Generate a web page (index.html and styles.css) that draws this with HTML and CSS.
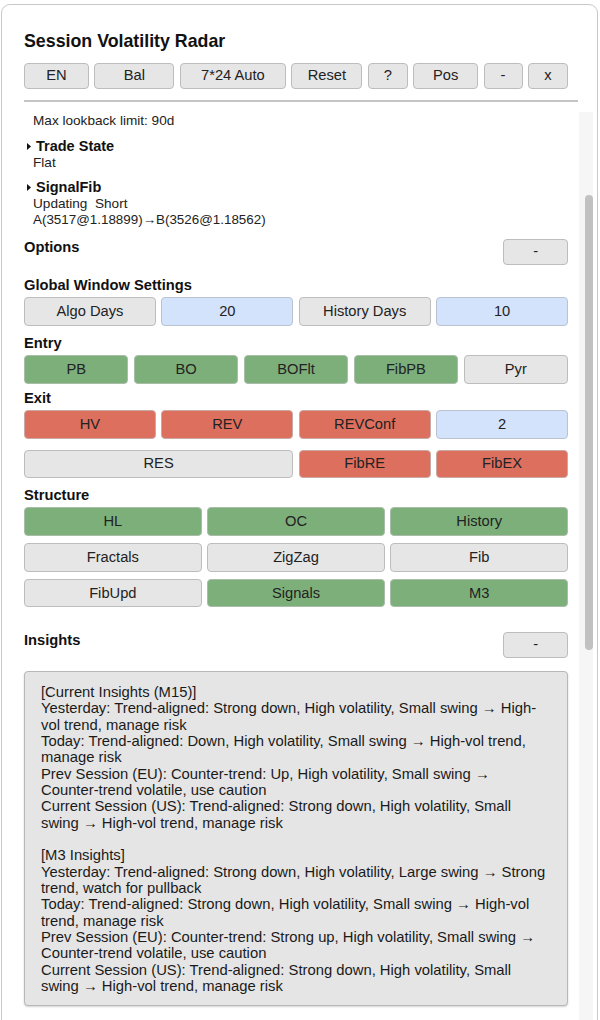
FILE: index.html
```html
<!DOCTYPE html>
<html lang="en">
<head>
<meta charset="utf-8">
<title>Session Volatility Radar</title>
<link rel="stylesheet" href="styles.css">
</head>
<body>
<div class="panel">
  <div class="title">Session Volatility Radar</div>
  <div class="toolbar">
    <button class="btn">EN</button>
    <button class="btn">Bal</button>
    <button class="btn">7*24 Auto</button>
    <button class="btn">Reset</button>
    <button class="btn">?</button>
    <button class="btn">Pos</button>
    <button class="btn">-</button>
    <button class="btn">x</button>
  </div>
  <div class="sep"></div>
  <div class="scroll">
    <div class="content">
      <div class="info">Max lookback limit: 90d</div>
      <div class="block">
        <div class="summary"><svg class="caret" viewBox="0 0 4 7" width="4" height="7"><path d="M0 0 L4 3.5 L0 7 Z" fill="#111"/></svg>Trade State</div>
        <div class="info">Flat</div>
      </div>
      <div class="block">
        <div class="summary"><svg class="caret" viewBox="0 0 4 7" width="4" height="7"><path d="M0 0 L4 3.5 L0 7 Z" fill="#111"/></svg>SignalFib</div>
        <div class="info">Updating&nbsp; Short</div>
        <div class="info fib">A(3517@1.18899)→B(3526@1.18562)</div>
      </div>

      <div class="sect-head opts">
        <div class="label">Options</div>
        <button class="btn small">-</button>
      </div>

      <div class="label l-global">Global Window Settings</div>
      <div class="grid g4">
        <button class="cell off">Algo Days</button>
        <button class="cell val">20</button>
        <button class="cell off">History Days</button>
        <button class="cell val">10</button>
      </div>

      <div class="label l-entry">Entry</div>
      <div class="grid g5">
        <button class="cell on">PB</button>
        <button class="cell on">BO</button>
        <button class="cell on">BOFlt</button>
        <button class="cell on">FibPB</button>
        <button class="cell off">Pyr</button>
      </div>

      <div class="label l-exit">Exit</div>
      <div class="grid g4 exit">
        <button class="cell ex">HV</button>
        <button class="cell ex">REV</button>
        <button class="cell ex">REVConf</button>
        <button class="cell val">2</button>
        <button class="cell off span2">RES</button>
        <button class="cell ex">FibRE</button>
        <button class="cell ex">FibEX</button>
      </div>

      <div class="label l-struct">Structure</div>
      <div class="grid g3">
        <button class="cell on">HL</button>
        <button class="cell on">OC</button>
        <button class="cell on">History</button>
        <button class="cell off">Fractals</button>
        <button class="cell off">ZigZag</button>
        <button class="cell off">Fib</button>
        <button class="cell off">FibUpd</button>
        <button class="cell on">Signals</button>
        <button class="cell on">M3</button>
      </div>

      <div class="sect-head ins-head">
        <div class="label">Insights</div>
        <button class="btn small">-</button>
      </div>

      <div class="insights">[Current Insights (M15)]
Yesterday: Trend-aligned: Strong down, High volatility, Small swing → High-
vol trend, manage risk
Today: Trend-aligned: Down, High volatility, Small swing → High-vol trend,
manage risk
Prev Session (EU): Counter-trend: Up, High volatility, Small swing →
Counter-trend volatile, use caution
Current Session (US): Trend-aligned: Strong down, High volatility, Small
swing → High-vol trend, manage risk

[M3 Insights]
Yesterday: Trend-aligned: Strong down, High volatility, Large swing → Strong
trend, watch for pullback
Today: Trend-aligned: Strong down, High volatility, Small swing → High-vol
trend, manage risk
Prev Session (EU): Counter-trend: Strong up, High volatility, Small swing →
Counter-trend volatile, use caution
Current Session (US): Trend-aligned: Strong down, High volatility, Small
swing → High-vol trend, manage risk</div>
    </div>
    <div class="track"><div class="thumb"></div></div>
  </div>
</div>
</body>
</html>
```

FILE: styles.css
```css
html, body {
  margin: 0;
  padding: 0;
}

body {
  width: 600px;
  height: 1020px;
  overflow: hidden;
  position: relative;
  background: #ffffff;
  font-family: "Liberation Sans", Arial, Helvetica, sans-serif;
  color: #222;
}

.panel {
  position: absolute;
  left: 1px;
  top: 4px;
  width: 597px;
  height: 1060px;
  box-sizing: border-box;
  border: 1px solid #c9c9c9;
  border-radius: 9px;
  background: #ffffff;
  padding: 25px 4px 0 22px;
}

.title {
  font-size: 17.8px;
  font-weight: bold;
  line-height: 22px;
  color: #111;
}

.toolbar {
  display: grid;
  grid-template-columns: 65fr 80fr 106fr 71fr 40fr 65fr 39fr 40fr;
  column-gap: 5.4px;
  margin: 10.7px 25px 0 0;
}

.btn {
  font-family: "Liberation Sans", Arial, Helvetica, sans-serif;
  font-size: 14.7px;
  line-height: 17px;
  height: 26.6px;
  padding: 0;
  margin: 0;
  border: 1px solid #bdbdbd;
  border-radius: 4px;
  background: #e6e6e6;
  color: #222;
  box-sizing: border-box;
}

.btn.small {
  width: 64.6px;
  height: 26px;
}

.sep {
  height: 2px;
  background: #c4c4c4;
  margin: 10.7px 15px 0 0;
}

.scroll {
  display: grid;
  grid-template-columns: 544px 14px;
  column-gap: 11px;
  margin-top: 6px;
  align-items: start;
}

.content {
  padding-top: 5px;
}

.track {
  margin-top: 4px;
  height: 960px;
  background: #f6f6f6;
}

.thumb {
  margin: 83px 0 0 6px;
  width: 8px;
  height: 455px;
  border-radius: 4px;
  background: #c1c1c1;
}

.info {
  font-size: 13.6px;
  line-height: 16px;
  padding-left: 9px;
  color: #222;
}

.info.fib {
  font-size: 13.4px;
}

.block {
  margin-top: 8.6px;
}

.summary {
  display: flex;
  align-items: center;
  gap: 5px;
  font-size: 14.5px;
  font-weight: bold;
  line-height: 17px;
  color: #111;
}

.caret {
  margin-left: 3px;
  flex: none;
}

.label {
  font-size: 14.7px;
  font-weight: bold;
  line-height: 17px;
  color: #111;
}

.sect-head {
  display: flex;
  justify-content: space-between;
  align-items: flex-start;
}

.opts {
  margin-top: 10.5px;
}

.l-global {
  margin-top: 12.2px;
}

.l-entry {
  margin-top: 9.5px;
}

.l-exit {
  margin-top: 6.3px;
}

.l-struct {
  margin-top: 9px;
}

.ins-head {
  margin-top: 24.6px;
}

.grid {
  display: grid;
  column-gap: 5.5px;
  row-gap: 7.2px;
  margin-top: 3.2px;
}

.g3 { grid-template-columns: repeat(3, 1fr); }
.g4 { grid-template-columns: repeat(4, 1fr); }
.g5 { grid-template-columns: repeat(5, 1fr); }

.grid.exit {
  row-gap: 11px;
}

.span2 {
  grid-column: span 2;
}

.cell {
  font-family: "Liberation Sans", Arial, Helvetica, sans-serif;
  font-size: 14.7px;
  line-height: 17px;
  height: 28.5px;
  padding: 0;
  margin: 0;
  box-sizing: border-box;
  border: 1px solid #bdbdbd;
  border-radius: 4px;
  color: #222;
}

.off { background: #e6e6e6; }
.val { background: #d3e3fc; border-color: #b9c3d2; }
.on  { background: #7daf7b; border-color: #a9bda8; }
.ex  { background: #dd6f5f; border-color: #c9a9a4; }

.insights {
  margin-top: 13.5px;
  background: #e5e5e5;
  border: 1px solid #b8b8b8;
  border-radius: 4px;
  box-shadow: 0 1px 2px rgba(0, 0, 0, 0.18);
  padding: 11.8px 8px 11px 16px;
  font-family: "Liberation Sans", "Noto Sans CJK SC", Arial, sans-serif;
  font-size: 14.8px;
  line-height: 16.33px;
  white-space: pre-line;
  color: #1a1a1a;
}
```
